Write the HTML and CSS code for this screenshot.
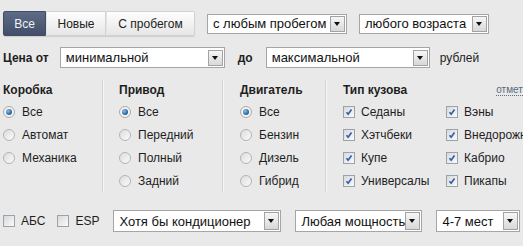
FILE: index.html
```html
<!DOCTYPE html>
<html lang="ru">
<head>
  <meta charset="UTF-8">
  <title>Поиск автомобиля</title>
<link rel="stylesheet" href="styles.css">
</head>
<body>
  <div class="page">

    <!-- Тип объявлений и фильтры -->
    <div class="row row-top">
      <div class="seg">
        <span class="seg-btn seg-all active">Все</span>
        <span class="seg-btn seg-new">Новые</span>
        <span class="seg-btn seg-used">С пробегом</span>
      </div>
      <div class="select sel-mileage"><span class="value">с любым пробегом</span><span class="arrow"></span></div>
      <div class="select sel-age"><span class="value">любого возраста</span><span class="arrow"></span></div>
    </div>

    <!-- Цена -->
    <div class="row row-price">
      <span class="label-bold">Цена от</span>
      <div class="select sel-price"><span class="value">минимальной</span><span class="arrow"></span></div>
      <span class="label-bold to">до</span>
      <div class="select sel-price sel-price-max"><span class="value">максимальной</span><span class="arrow"></span></div>
      <span class="currency">рублей</span>
    </div>

    <div class="filters">
      <div class="col col-box">
        <div class="col-title">Коробка</div>
        <label class="opt"><span class="radio checked"></span>Все</label>
        <label class="opt"><span class="radio"></span>Автомат</label>
        <label class="opt"><span class="radio"></span>Механика</label>
      </div>
      <div class="col col-drive">
        <div class="col-title">Привод</div>
        <label class="opt"><span class="radio checked"></span>Все</label>
        <label class="opt"><span class="radio"></span>Передний</label>
        <label class="opt"><span class="radio"></span>Полный</label>
        <label class="opt"><span class="radio"></span>Задний</label>
      </div>
      <div class="col col-engine">
        <div class="col-title">Двигатель</div>
        <label class="opt"><span class="radio checked"></span>Все</label>
        <label class="opt"><span class="radio"></span>Бензин</label>
        <label class="opt"><span class="radio"></span>Дизель</label>
        <label class="opt"><span class="radio"></span>Гибрид</label>
      </div>
      <div class="col col-body">
        <div class="col-title">Тип кузова <a class="toggle-all" href="#">отметить все</a></div>
        <div class="body-grid">
          <label class="opt"><span class="check checked"><svg viewBox="0 0 12 12"><path d="M3 6.2 5 8.6 9 3" /></svg></span>Седаны</label>
          <label class="opt"><span class="check checked"><svg viewBox="0 0 12 12"><path d="M3 6.2 5 8.6 9 3" /></svg></span>Вэны</label>
          <label class="opt"><span class="check checked"><svg viewBox="0 0 12 12"><path d="M3 6.2 5 8.6 9 3" /></svg></span>Хэтчбеки</label>
          <label class="opt"><span class="check checked"><svg viewBox="0 0 12 12"><path d="M3 6.2 5 8.6 9 3" /></svg></span>Внедорожники</label>
          <label class="opt"><span class="check checked"><svg viewBox="0 0 12 12"><path d="M3 6.2 5 8.6 9 3" /></svg></span>Купе</label>
          <label class="opt"><span class="check checked"><svg viewBox="0 0 12 12"><path d="M3 6.2 5 8.6 9 3" /></svg></span>Кабрио</label>
          <label class="opt"><span class="check checked"><svg viewBox="0 0 12 12"><path d="M3 6.2 5 8.6 9 3" /></svg></span>Универсалы</label>
          <label class="opt"><span class="check checked"><svg viewBox="0 0 12 12"><path d="M3 6.2 5 8.6 9 3" /></svg></span>Пикапы</label>
        </div>
      </div>
    </div>

    <!-- Опции -->
    <div class="row row-extra">
      <label class="opt"><span class="check"></span>АБС</label>
      <label class="opt opt-esp"><span class="check"></span>ESP</label>
      <div class="select sel-climate"><span class="value">Хотя бы кондиционер</span><span class="arrow"></span></div>
      <div class="select sel-power"><span class="value">Любая мощность</span><span class="arrow"></span></div>
      <div class="select sel-seats"><span class="value">4-7 мест</span><span class="arrow"></span></div>
    </div>

  </div>
</body>
</html>
```

FILE: styles.css
```css
/* General */
html, body {
  margin: 0;
  padding: 0;
  overflow: hidden;
}

body {
  font-family: "Liberation Sans", Arial, sans-serif;
  font-size: 12px;
  color: #1e1e1e;
  background-color: #e9e9e9;
}

.page {
  padding: 11px 0 0 3px;
  white-space: nowrap;
}

.row {
  display: flex;
  align-items: center;
}

.row > * {
  flex: none;
}

/* Segmented buttons */
.seg {
  display: flex;
  height: 25px;
  box-shadow: 0 1px 1px rgba(0, 0, 0, 0.12);
  border-radius: 2px;
}

.seg-btn {
  display: flex;
  align-items: center;
  justify-content: center;
  box-sizing: border-box;
  background: linear-gradient(#fefefe, #e6e6e6);
  border: 1px solid #d2d2d2;
  border-left-color: #e4e4e4;
  color: #222;
}

.seg-all {
  width: 43px;
  border-radius: 2px 0 0 2px;
}

.seg-new {
  width: 60px;
}

.seg-used {
  width: 89px;
  border-radius: 0 2px 2px 0;
}

.seg-btn.active {
  background: linear-gradient(#5d6b86, #424f68);
  border-color: #414d65;
  color: #eef1f6;
}

/* Fake selects */
.select {
  display: flex;
  align-items: center;
  box-sizing: border-box;
  height: 20px;
  background-color: #fff;
  border: 1px solid #a5a5a5;
  font-size: 13px;
  color: #111;
}

.select .value {
  flex: 1;
  padding-left: 5px;
  overflow: hidden;
}

.select .arrow {
  position: relative;
  box-sizing: border-box;
  width: 15px;
  height: 16px;
  margin-right: 1px;
  background: linear-gradient(#f6f6f6, #d8d8d8);
  border: 1px solid #a2a2a2;
}

.select .arrow::after {
  content: "";
  position: absolute;
  left: 3px;
  top: 5px;
  border-left: 3.5px solid transparent;
  border-right: 3.5px solid transparent;
  border-top: 4px solid #111;
}

.sel-mileage {
  width: 140px;
  margin-left: 12px;
}

.sel-age {
  width: 130px;
  margin-left: 12px;
}

/* Price row */
.row-price {
  margin-top: 11px;
}

.row-price .select {
  height: 21px;
}

.label-bold {
  font-weight: bold;
}

.sel-price {
  width: 165px;
  margin-left: 11px;
}

.to {
  margin-left: 13px;
}

.sel-price-max {
  width: 164px;
  margin-left: 13px;
}

.currency {
  margin-left: 10px;
}

/* Filter columns */
.filters {
  display: flex;
  margin-top: 12px;
}

.col {
  flex: none;
  border-left: 1px solid #d3d3d3;
  box-shadow: inset 1px 0 0 #f6f6f6;
  padding-left: 16px;
}

.col-box {
  width: 99px;
  border-left: none;
  box-shadow: none;
  padding-left: 0;
}

.col-drive {
  width: 103px;
}

.col-engine {
  width: 85px;
  padding-left: 17px;
}

.col-body {
  padding-left: 17px;
}

.col-title {
  display: flex;
  align-items: center;
  height: 20px;
  font-weight: bold;
}

.toggle-all {
  margin-left: 89px;
  font-size: 10px;
  font-weight: normal;
  color: #5a6a80;
  text-decoration: none;
  border-bottom: 1px dotted #5a6a80;
  line-height: 11px;
}

.opt {
  display: flex;
  align-items: center;
  height: 23px;
}

.body-grid {
  display: grid;
  grid-template-columns: 103px auto;
}

/* Radios */
.radio {
  position: relative;
  box-sizing: border-box;
  width: 12px;
  height: 12px;
  margin-right: 7px;
  border-radius: 50%;
  border: 1px solid #b4b4b4;
  background: linear-gradient(135deg, #dcdcdc, #fbfbfb);
}

.radio.checked {
  border-color: #a9a9a9;
  background: #f3f3f3;
}

.radio.checked::after {
  content: "";
  position: absolute;
  left: 2px;
  top: 2px;
  width: 6px;
  height: 6px;
  border-radius: 50%;
  background: radial-gradient(circle at 35% 35%, #8fc0e6, #1f5e96 70%);
}

/* Checkboxes */
.check {
  box-sizing: border-box;
  width: 12px;
  height: 12px;
  margin-right: 6px;
  border: 1px solid #9aa2aa;
  background: linear-gradient(135deg, #d9d9d9, #fafafa);
}

.check svg {
  display: block;
  width: 10px;
  height: 10px;
}

.check path {
  fill: none;
  stroke: #2d5fae;
  stroke-width: 2;
}

/* Bottom row */
.row-extra {
  margin-top: 18px;
}

.row-extra .opt {
  height: 22px;
}

.row-extra .select {
  height: 22px;
}

.row-extra .arrow {
  height: 18px;
}

.row-extra .arrow::after {
  top: 6px;
}

.opt-esp {
  margin-left: 12px;
}

.sel-climate {
  width: 168px;
  margin-left: 14px;
}

.sel-power {
  width: 127px;
  margin-left: 14px;
}

.sel-seats {
  width: 84px;
  margin-left: 14px;
}
```
